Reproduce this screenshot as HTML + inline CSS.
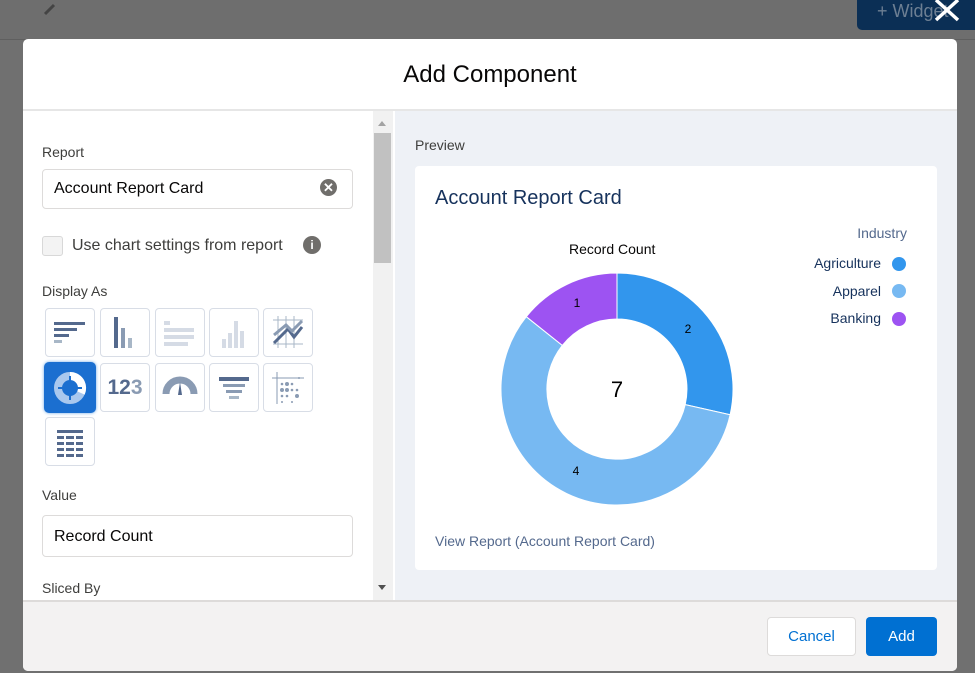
<!DOCTYPE html>
<html><head><style>
*{box-sizing:border-box;margin:0;padding:0}
body{width:975px;height:673px;overflow:hidden;background:#707070;font-family:"Liberation Sans",sans-serif;position:relative}
.a{position:absolute}
.tile{position:absolute;width:50px;height:49px;border:1px solid #d8dde6;border-radius:4px;background:#fff}
.lbl{position:absolute;left:42px;font-size:14px;color:#3e3e3c}
</style></head><body>
<div class="a" style="left:0;top:0;width:975px;height:40px;background:#6e6e6e"></div>
<div class="a" style="left:0;top:39px;width:975px;height:1px;background:#5f5f5f"></div>
<div class="a" style="left:857px;top:0;width:118px;height:30px;background:#0b2f55;border-radius:0 0 0 5px;color:#6d7f93;font-size:18px;padding:1px 0 0 20px">+ Widget</div>
<svg class="a" style="left:932px;top:0" width="30" height="22"><path d="M4 0L26 20M26 0L4 20" stroke="#fff" stroke-width="3.5"/></svg>
<svg class="a" style="left:42px;top:2px" width="16" height="14"><path d="M3 12L12 3" stroke="#444" stroke-width="3"/></svg>

<div class="a" style="left:23px;top:39px;width:934px;height:632px;background:#fff;border-radius:5px;overflow:hidden">
 <div class="a" style="left:0;top:0;width:934px;height:72px;border-bottom:2px solid #e6e6e6;text-align:center;font-size:24px;color:#080707;line-height:72px">Add Component</div>
 <div class="a" style="left:372px;top:72px;width:562px;height:489px;background:#eef1f6"></div>
 <div class="a" style="left:350px;top:72px;width:20px;height:489px;background:#f1f1f1"></div>
 <div class="a" style="left:351px;top:94px;width:17px;height:130px;background:#c1c1c1"></div>
 <div class="a" style="left:355px;top:82px;width:0;height:0;border-left:4px solid transparent;border-right:4px solid transparent;border-bottom:5px solid #a3a3a3"></div>
 <div class="a" style="left:355px;top:546px;width:0;height:0;border-left:4px solid transparent;border-right:4px solid transparent;border-top:5px solid #505050"></div>
 <div class="a" style="left:0;top:561px;width:934px;height:71px;background:#f3f2f2;border-top:2px solid #dddbda"></div>
 <div class="a" style="left:744px;top:578px;width:89px;height:39px;border:1px solid #dddbda;border-radius:4px;background:#fff;color:#0070d2;font-size:15px;text-align:center;line-height:37px">Cancel</div>
 <div class="a" style="left:843px;top:578px;width:71px;height:39px;border-radius:4px;background:#0070d2;color:#fff;font-size:15px;text-align:center;line-height:39px">Add</div>
</div>

<div class="lbl" style="top:144px">Report</div>
<div class="a" style="left:42px;top:169px;width:311px;height:40px;border:1px solid #dddbda;border-radius:4px;font-size:16px;color:#080707;padding:10px 0 0 11px">Account Report Card</div>
<div class="a" style="left:320px;top:179px;width:17px;height:17px;border-radius:50%;background:#706e6b;color:#fff;font-size:13px;font-weight:bold;text-align:center;line-height:17px">✕</div>
<div class="a" style="left:42px;top:236px;width:21px;height:20px;border:1px solid #d8d8d8;border-radius:3px;background:#f3f3f3"></div>
<div class="a" style="left:72px;top:237px;font-size:16px;color:#3e3e3c">Use chart settings from report</div>
<div class="a" style="left:303px;top:236px;width:18px;height:18px;border-radius:50%;background:#706e6b;color:#fff;font-size:12px;font-weight:bold;text-align:center;line-height:18px">i</div>
<div class="lbl" style="top:283px">Display As</div>

<div class="tile" style="left:45px;top:308px"><svg width="48" height="47"><g fill="#54698d"><rect x="8" y="13" width="31" height="3"/><rect x="8" y="19" width="23" height="3"/><rect x="8" y="25" width="15" height="3"/><rect x="8" y="31" width="8" height="3" fill="#a8b7c7"/></g></svg></div>
<div class="tile" style="left:100px;top:308px"><svg width="48" height="47"><rect x="13" y="8" width="4" height="31" fill="#54698d"/><rect x="20" y="19" width="4" height="20" fill="#8a9bb3"/><rect x="27" y="29" width="4" height="10" fill="#a8b7c7"/></svg></div>
<div class="tile" style="left:155px;top:308px"><svg width="48" height="47"><g fill="#d5dbe5"><rect x="8" y="12" width="6" height="4"/><rect x="8" y="19" width="30" height="4"/><rect x="8" y="26" width="30" height="4"/><rect x="8" y="33" width="24" height="4"/></g></svg></div>
<div class="tile" style="left:209px;top:308px"><svg width="48" height="47"><g fill="#d5dbe5"><rect x="12" y="30" width="4" height="9"/><rect x="18" y="24" width="4" height="15"/><rect x="24" y="12" width="4" height="27"/><rect x="30" y="22" width="4" height="17"/></g></svg></div>
<div class="tile" style="left:263px;top:308px"><svg width="48" height="47"><path d="M9 11H39M9 35H39M14 7V39M22 7V39M30 7V39" stroke="#a8b7c7" stroke-width="1"/><path d="M10 34L24 20L30 28L38 18" stroke="#54698d" stroke-width="3" fill="none"/><path d="M10 26L22 16L28 22L38 12" stroke="#8a9bb3" stroke-width="3" fill="none"/></svg></div>

<div class="a" style="left:44px;top:362px;width:52px;height:51px;border-radius:5px;background:#1b6fd0;box-shadow:0 0 3px #6aa7e8"></div>
<svg class="a" style="left:50px;top:368px" width="40" height="40"><circle cx="20" cy="20" r="12" fill="none" stroke="#a9c8ee" stroke-width="8"/><path d="M20 8A12 12 0 0 1 31 25" fill="none" stroke="#fff" stroke-width="8"/><path d="M20 8V15M8 20H14M26 20H32M20 26V32" stroke="#1b6fd0" stroke-width="2"/></svg>
<div class="tile" style="left:100px;top:363px;font-size:21px;font-weight:bold;color:#54698d;text-align:center;line-height:47px">12<span style="color:#8a9bb3">3</span></div>
<div class="tile" style="left:155px;top:363px"><svg width="48" height="47"><path d="M10 30A14 14 0 0 1 38 30" stroke="#8a9bb3" stroke-width="7" fill="none"/><path d="M24 18L22 31H26Z" fill="#54698d"/></svg></div>
<div class="tile" style="left:209px;top:363px"><svg width="48" height="47"><rect x="9" y="13" width="30" height="4" fill="#54698d"/><rect x="13" y="20" width="22" height="3" fill="#8a9bb3"/><rect x="16" y="26" width="16" height="3" fill="#8a9bb3"/><rect x="19" y="32" width="10" height="3" fill="#a8b7c7"/></svg></div>
<div class="tile" style="left:263px;top:363px"><svg width="48" height="47"><path d="M13 8V40M8 14H40" stroke="#8a9bb3"/><g fill="#8a9bb3"><circle cx="18" cy="20" r="1.3"/><circle cx="23" cy="20" r="2"/><circle cx="28" cy="20" r="1.3"/><circle cx="18" cy="26" r="2"/><circle cx="23" cy="26" r="2"/><circle cx="28" cy="26" r="1.3"/><circle cx="33" cy="26" r="1.3"/><circle cx="18" cy="32" r="1.3"/><circle cx="23" cy="32" r="1.3"/><circle cx="33" cy="32" r="2"/><circle cx="18" cy="38" r="1"/><circle cx="28" cy="38" r="1"/><circle cx="35" cy="14" r="1"/></g></svg></div>
<div class="tile" style="left:45px;top:417px"><svg width="48" height="47"><g fill="#54698d"><rect x="11" y="12" width="26" height="3"/><rect x="11" y="18" width="7" height="3"/><rect x="20" y="18" width="8" height="3"/><rect x="30" y="18" width="7" height="3"/><rect x="11" y="24" width="7" height="3"/><rect x="20" y="24" width="8" height="3"/><rect x="30" y="24" width="7" height="3"/><rect x="11" y="30" width="7" height="3"/><rect x="20" y="30" width="8" height="3"/><rect x="30" y="30" width="7" height="3"/><rect x="11" y="36" width="7" height="3"/><rect x="20" y="36" width="8" height="3"/><rect x="30" y="36" width="7" height="3"/></g></svg></div>

<div class="lbl" style="top:487px">Value</div>
<div class="a" style="left:42px;top:515px;width:311px;height:42px;border:1px solid #dddbda;border-radius:4px;font-size:16px;color:#080707;padding:12px 0 0 11px">Record Count</div>
<div class="lbl" style="top:580px">Sliced By</div>

<div class="a" style="left:415px;top:137px;font-size:14px;color:#3e3e3c">Preview</div>
<div class="a" style="left:415px;top:166px;width:522px;height:404px;background:#fff;border-radius:4px"></div>
<div class="a" style="left:435px;top:187px;font-size:20px;color:#16325c">Account Report Card</div>
<div class="a" style="left:569px;top:241px;font-size:14px;color:#080707">Record Count</div>
<svg class="a" style="left:0;top:0" width="975" height="673">
<path d="M617 273A116 116 0 0 1 730.1 414.8L685.2 404.6A70 70 0 0 0 617 319Z" fill="#3296ed" stroke="#fff" stroke-width="1"/>
<path d="M730.1 414.8A116 116 0 1 1 526.3 316.7L562.3 345.4A70 70 0 1 0 685.2 404.6Z" fill="#77b9f2" stroke="#fff" stroke-width="1"/>
<path d="M526.3 316.7A116 116 0 0 1 617 273L617 319A70 70 0 0 0 562.3 345.4Z" fill="#9d53f2" stroke="#fff" stroke-width="1"/>
<text x="617" y="397" font-size="22" text-anchor="middle" font-family="Liberation Sans">7</text>
<text x="688" y="333" font-size="12" text-anchor="middle" font-family="Liberation Sans">2</text>
<text x="577" y="307" font-size="12" text-anchor="middle" font-family="Liberation Sans">1</text>
<text x="576" y="475" font-size="12" text-anchor="middle" font-family="Liberation Sans">4</text>
<circle cx="899" cy="264" r="7" fill="#3296ed"/><circle cx="899" cy="291" r="7" fill="#77b9f2"/><circle cx="899" cy="319" r="7" fill="#9d53f2"/>
</svg>
<div class="a" style="left:780px;top:225px;width:127px;text-align:right;font-size:14px;color:#54698d">Industry</div>
<div class="a" style="left:760px;top:250px;width:121px;text-align:right;font-size:14px;color:#16325c;line-height:27.5px">Agriculture<br>Apparel<br>Banking</div>
<div class="a" style="left:435px;top:533px;font-size:14px;color:#54698d">View Report (Account Report Card)</div>
</body></html>
